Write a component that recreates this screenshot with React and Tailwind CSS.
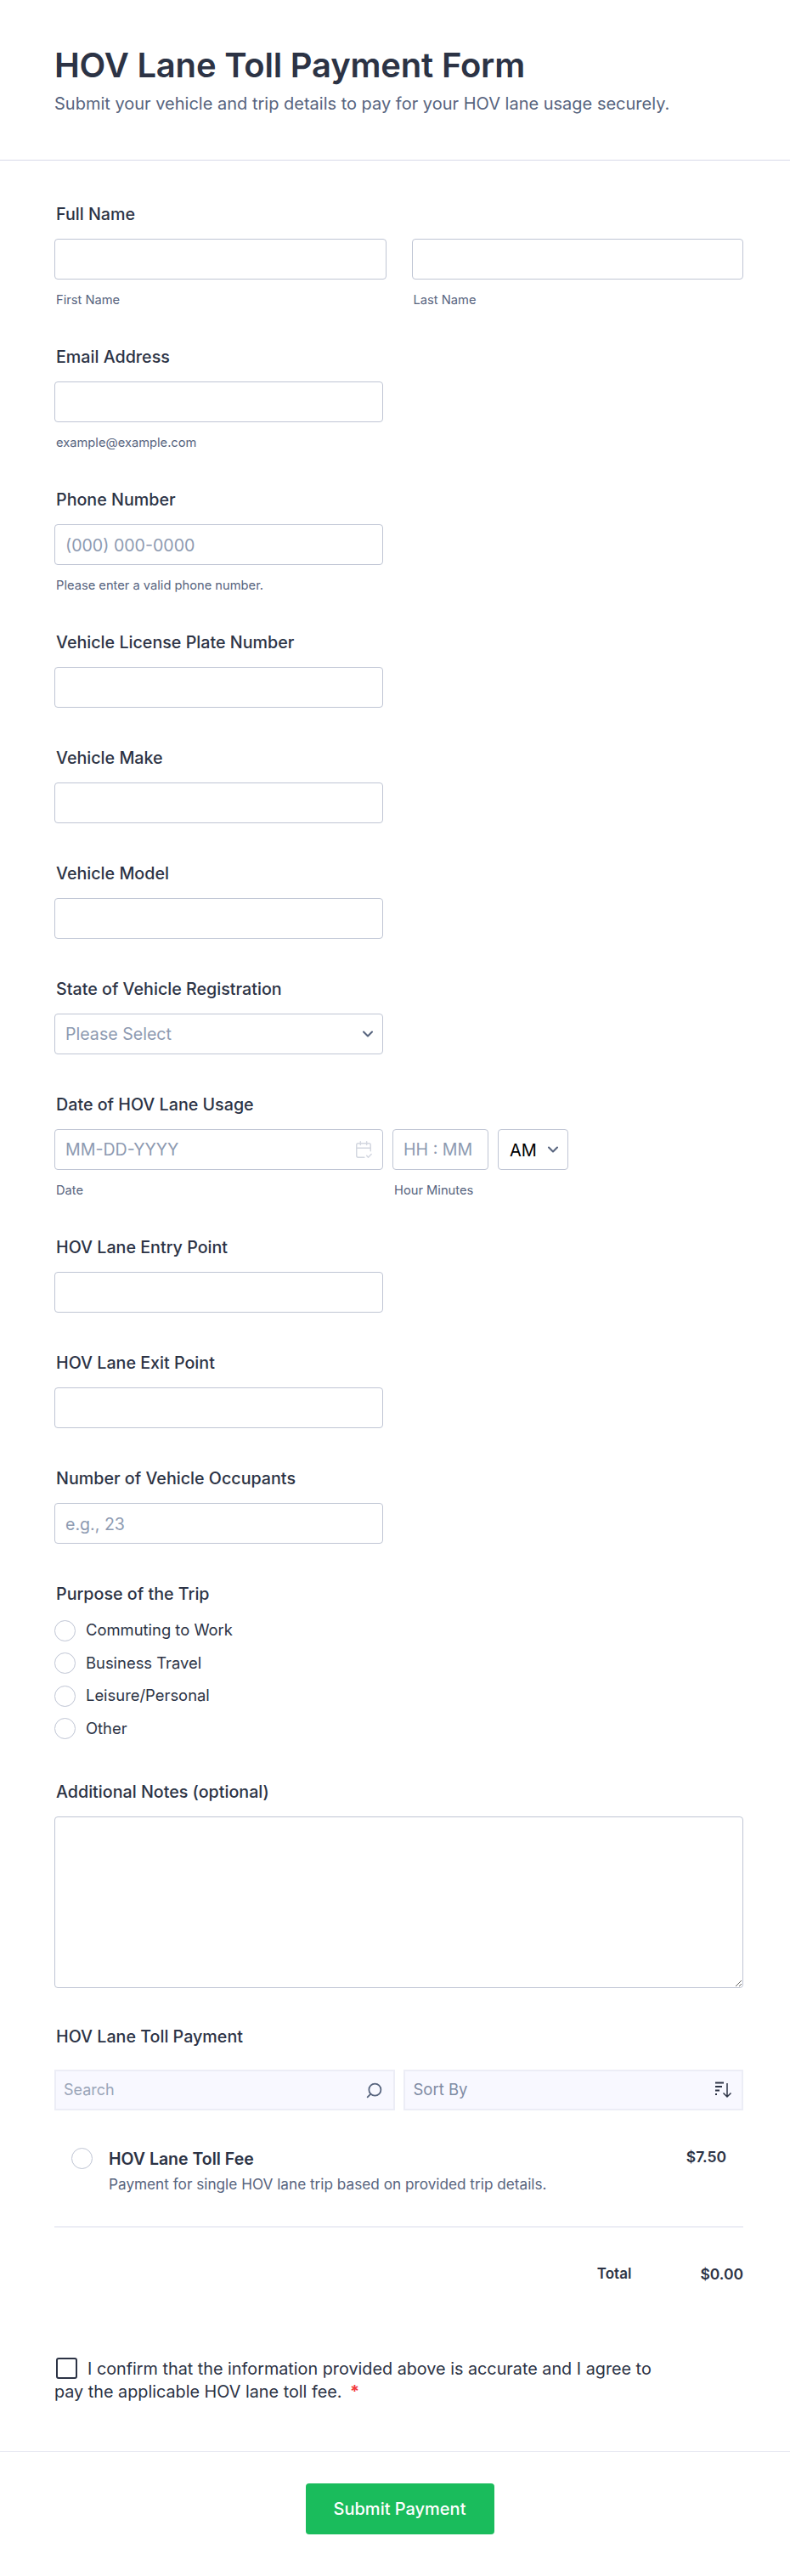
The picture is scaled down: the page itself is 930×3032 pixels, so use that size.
import { CalendarCheck2, ChevronDown, Search } from 'lucide-react';

const inputClass = 'w-full h-12 px-3 pt-[2px] rounded border border-[#bfc5d4] bg-white text-[19.6px] text-[#2c3345] placeholder:text-[#8d9ab1] outline-none';

function Label({ children }) {
    return <label className="block h-[25px] pt-px pl-[2px] mb-[17px] text-[19.7px] leading-6 font-medium text-[#2c3345]">{children}</label>;
}

function Hint({ children }) {
    return <p className="h-4 mt-4 pl-[2px] text-[14.7px] leading-4 text-[#57647e]">{children}</p>;
}

function Field({ label, placeholder, hint }) {
    return (
        <div>
            <Label>{label}</Label>
            <input type="text" className={`${inputClass} max-w-[387px]`} placeholder={placeholder} />
            {hint && <Hint>{hint}</Hint>}
        </div>
    );
}

function Radio({ label }) {
    return (
        <div className="flex items-center h-[38.5px]">
            <span className="w-[25px] h-[25px] rounded-full border border-[#bfc5d4] bg-white"></span>
            <span className="ml-[12px] text-[18.4px] text-[#2c3345]">{label}</span>
        </div>
    );
}

export default function App() {
    return (
        <div className="min-h-screen bg-white font-['Inter',sans-serif] text-[#2c3345]">
            {/* Header */}
            <div className="h-[189px] pt-[52px] px-16 border-b border-[#d8dae9]">
                <h1 className="text-[40px] leading-[50px] font-semibold tracking-[-0.2px]">HOV Lane Toll Payment Form</h1>
                <p className="mt-[6px] text-xl leading-7 text-[#57647e]">Submit your vehicle and trip details to pay for your HOV lane usage securely.</p>
            </div>

            <form className="pl-16 pr-[55px] pt-[50px] flex flex-col gap-[46px]" onSubmit={(e) => e.preventDefault()}>
                <div>
                    <Label>Full Name</Label>
                    <div className="grid grid-cols-2 gap-[30px]">
                        <div>
                            <input type="text" className={inputClass} />
                            <Hint>First Name</Hint>
                        </div>
                        <div>
                            <input type="text" className={inputClass} />
                            <Hint>Last Name</Hint>
                        </div>
                    </div>
                </div>

                <Field label="Email Address" hint="example@example.com" />
                <Field label="Phone Number" placeholder="(000) 000-0000" hint="Please enter a valid phone number." />
                <Field label="Vehicle License Plate Number" />
                <Field label="Vehicle Make" />
                <Field label="Vehicle Model" />

                <div>
                    <Label>State of Vehicle Registration</Label>
                    <div className="w-[387px] h-12 pl-3 pr-[7px] flex items-center justify-between rounded border border-[#bfc5d4] text-[19.6px] text-[#8d9ab1]">
                        <span className="pt-[2px]">Please Select</span>
                        <ChevronDown className="w-5 h-5 text-[#57647e]" strokeWidth={2.5} />
                    </div>
                </div>

                <div>
                    <Label>Date of HOV Lane Usage</Label>
                    <div className="flex gap-[11px]">
                        <div>
                            <div className="w-[387px] h-12 pl-3 pr-[11px] flex items-center justify-between rounded border border-[#bfc5d4] text-[19.6px] text-[#8d9ab1]">
                                <span className="pt-[2px]">MM-DD-YYYY</span>
                                <CalendarCheck2 className="w-[22px] h-[22px] text-[#d3d7e0]" strokeWidth={1.6} />
                            </div>
                            <Hint>Date</Hint>
                        </div>
                        <div>
                            <div className="w-[113px] h-12 px-3 pt-[2px] flex items-center rounded border border-[#bfc5d4] text-[19.6px] whitespace-nowrap text-[#8d9ab1]">HH : MM</div>
                            <Hint>Hour Minutes</Hint>
                        </div>
                        <div className="w-[83px] h-12 pl-[13px] pr-[7px] flex items-center justify-between rounded border border-[#bfc5d4] text-[20px] text-black">
                            <span className="pt-[2px]">AM</span>
                            <ChevronDown className="w-5 h-5 text-[#57647e]" strokeWidth={2.5} />
                        </div>
                    </div>
                </div>

                <Field label="HOV Lane Entry Point" />
                <Field label="HOV Lane Exit Point" />
                <Field label="Number of Vehicle Occupants" placeholder="e.g., 23" />

                <div className="-mb-[4px]">
                    <label className="block h-[25px] pt-px pl-[2px] mb-[12px] text-[19.7px] leading-6 font-medium">Purpose of the Trip</label>
                    <Radio label="Commuting to Work" />
                    <Radio label="Business Travel" />
                    <Radio label="Leisure/Personal" />
                    <Radio label="Other" />
                </div>

                <div className="-mb-px">
                    <Label>Additional Notes (optional)</Label>
                    <textarea className="block w-full h-[202px] rounded border border-[#bfc5d4] outline-none"></textarea>
                </div>

                <div>
                    <label className="block h-6 pl-[2px] mb-[27px] text-[19.7px] leading-6 font-medium">HOV Lane Toll Payment</label>
                    <div className="grid grid-cols-2 gap-[10px]">
                        <div className="h-12 pl-[9px] pr-3 flex items-center justify-between bg-[#f8f8ff] border-2 border-[#ecedf6] text-lg text-[#9aa5b8]">
                            <span>Search</span>
                            <Search className="w-[21px] h-[21px] -scale-x-100 text-[#57647e]" strokeWidth={2} />
                        </div>
                        <div className="h-12 pl-[10px] pr-[11px] flex items-center justify-between bg-[#f8f8ff] border-2 border-[#ecedf6] text-[18.5px] text-[#7f8ba3]">
                            <span>Sort By</span>
                            <svg className="w-5 h-5 text-[#2c3345]" viewBox="0 0 20 20" fill="none" stroke="currentColor" strokeWidth="1.8">
                                <path d="M0 1.5h10M0 6h8M0 10.5h5M0 15h2" />
                                <path d="M14 2v16M9.5 13.5L14 18l4.5-4.5" strokeWidth="1.5" />
                            </svg>
                        </div>
                    </div>

                    <div className="flex justify-between pt-[45px] px-5 h-[138px] border-b-2 border-[#ecedf5]">
                        <div className="flex">
                            <span className="w-[25px] h-[25px] -mt-px rounded-full border border-[#bfc5d4]"></span>
                            <div className="ml-[19px]">
                                <p className="text-[19.5px] leading-6 font-semibold">HOV Lane Toll Fee</p>
                                <p className="mt-[7px] text-[17.2px] leading-[22px] text-[#57647e]">Payment for single HOV lane trip based on provided trip details.</p>
                            </div>
                        </div>
                        <p className="-mt-[2px] text-[17.5px] leading-6 font-semibold">$7.50</p>
                    </div>

                    <div className="flex justify-end items-center mt-[43px] h-6">
                        <span className="text-[17px] font-semibold">Total</span>
                        <span className="ml-[81px] text-[17.5px] font-semibold">$0.00</span>
                    </div>
                </div>

                <div className="w-[720px] mt-[40px] text-[19.8px] leading-[27px] text-[#2c3345]">
                    <span className="inline-block w-[25px] h-[25px] ml-[2px] mr-[12px] align-[-5px] rounded-[3px] border-2 border-[#2c3345]"></span>
                    I confirm that the information provided above is accurate and I agree to pay the applicable HOV lane toll fee. <span className="ml-[4px] text-[#f23a3c] font-bold">*</span>
                </div>
            </form>

            {/* Footer */}
            <div className="mt-[56px] h-[147px] pt-[37px] pl-[11px] flex justify-center border-t border-[#e8e9f3]">
                <button className="w-[222px] h-[60px] rounded bg-[#1abc5c] text-white text-[20px] font-medium">Submit Payment</button>
            </div>
        </div>
    );
}
